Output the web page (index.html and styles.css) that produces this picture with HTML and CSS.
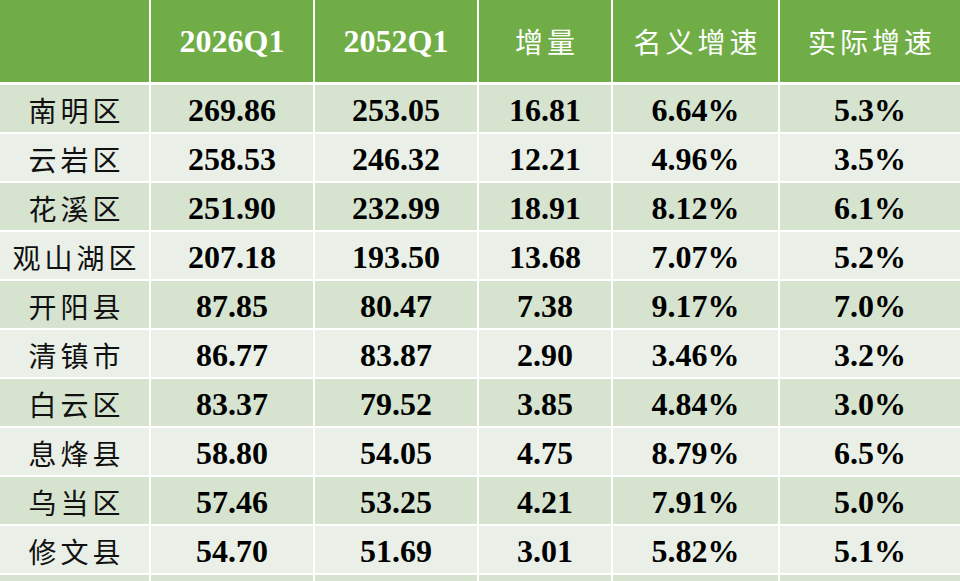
FILE: index.html
```html
<!DOCTYPE html>
<html lang="zh">
<head>
<meta charset="utf-8">
<link rel="stylesheet" href="styles.css">
</head>
<body>
<table class="data">
  <colgroup>
    <col class="c1"><col class="c2"><col class="c3"><col class="c4"><col class="c5"><col class="c6">
  </colgroup>
  <thead>
    <tr>
      <th class="blank"></th>
      <th class="num">2026Q1</th>
      <th class="num">2052Q1</th>
      <th class="cjk">增量</th>
      <th class="cjk">名义增速</th>
      <th class="cjk last">实际增速</th>
    </tr>
  </thead>
  <tbody>
    <tr class="odd"><td class="name">南明区</td><td>269.86</td><td>253.05</td><td>16.81</td><td>6.64%</td><td class="last">5.3%</td></tr>
    <tr class="even"><td class="name">云岩区</td><td>258.53</td><td>246.32</td><td>12.21</td><td>4.96%</td><td class="last">3.5%</td></tr>
    <tr class="odd"><td class="name">花溪区</td><td>251.90</td><td>232.99</td><td>18.91</td><td>8.12%</td><td class="last">6.1%</td></tr>
    <tr class="even"><td class="name">观山湖区</td><td>207.18</td><td>193.50</td><td>13.68</td><td>7.07%</td><td class="last">5.2%</td></tr>
    <tr class="odd"><td class="name">开阳县</td><td>87.85</td><td>80.47</td><td>7.38</td><td>9.17%</td><td class="last">7.0%</td></tr>
    <tr class="even"><td class="name">清镇市</td><td>86.77</td><td>83.87</td><td>2.90</td><td>3.46%</td><td class="last">3.2%</td></tr>
    <tr class="odd"><td class="name">白云区</td><td>83.37</td><td>79.52</td><td>3.85</td><td>4.84%</td><td class="last">3.0%</td></tr>
    <tr class="even"><td class="name">息烽县</td><td>58.80</td><td>54.05</td><td>4.75</td><td>8.79%</td><td class="last">6.5%</td></tr>
    <tr class="odd"><td class="name">乌当区</td><td>57.46</td><td>53.25</td><td>4.21</td><td>7.91%</td><td class="last">5.0%</td></tr>
    <tr class="even"><td class="name">修文县</td><td>54.70</td><td>51.69</td><td>3.01</td><td>5.82%</td><td class="last">5.1%</td></tr>
    <tr class="odd stub"><td></td><td></td><td></td><td></td><td></td><td class="last"></td></tr>
  </tbody>
</table>
</body>
</html>
```
FILE: styles.css
```css
html, body {
  margin: 0;
  padding: 0;
  background: #ffffff;
  overflow: hidden;
  width: 960px;
  height: 581px;
}

.data {
  border-collapse: separate;
  border-spacing: 0;
  table-layout: fixed;
  width: 960px;
}

.c1 { width: 151px; }
.c2 { width: 164px; }
.c3 { width: 164px; }
.c4 { width: 134px; }
.c5 { width: 167px; }
.c6 { width: 180px; }

th, td {
  padding: 0;
  text-align: center;
  vertical-align: middle;
  border-right: 2px solid #ffffff;
  border-bottom: 2px solid #ffffff;
  box-sizing: border-box;
}

th.last, td.last {
  border-right: 0;
}

thead th {
  background: #70ad47;
  color: #ffffff;
  height: 85px;
  border-bottom-width: 3px;
  padding-bottom: 0;
}

th.num {
  font-family: "Liberation Serif", "Times New Roman", serif;
  font-weight: bold;
  font-size: 32px;
}

th.cjk {
  font-family: "Noto Sans CJK SC", sans-serif;
  font-weight: 400;
  font-size: 28px;
  letter-spacing: 4px;
  padding-left: 4px;
}

tbody td {
  height: 49px;
  font-family: "Liberation Serif", "Times New Roman", serif;
  font-weight: bold;
  font-size: 32px;
  color: #000000;
  padding-top: 3px;
}

tbody td.name {
  font-family: "Noto Sans CJK SC", sans-serif;
  font-weight: 400;
  font-size: 28px;
  letter-spacing: 4px;
  padding-left: 4px;
  color: #111111;
}

tr.odd td {
  background: #d5e3cf;
}

tr.even td {
  background: #eaf0e7;
}

tr.stub td {
  height: 30px;
}
```
